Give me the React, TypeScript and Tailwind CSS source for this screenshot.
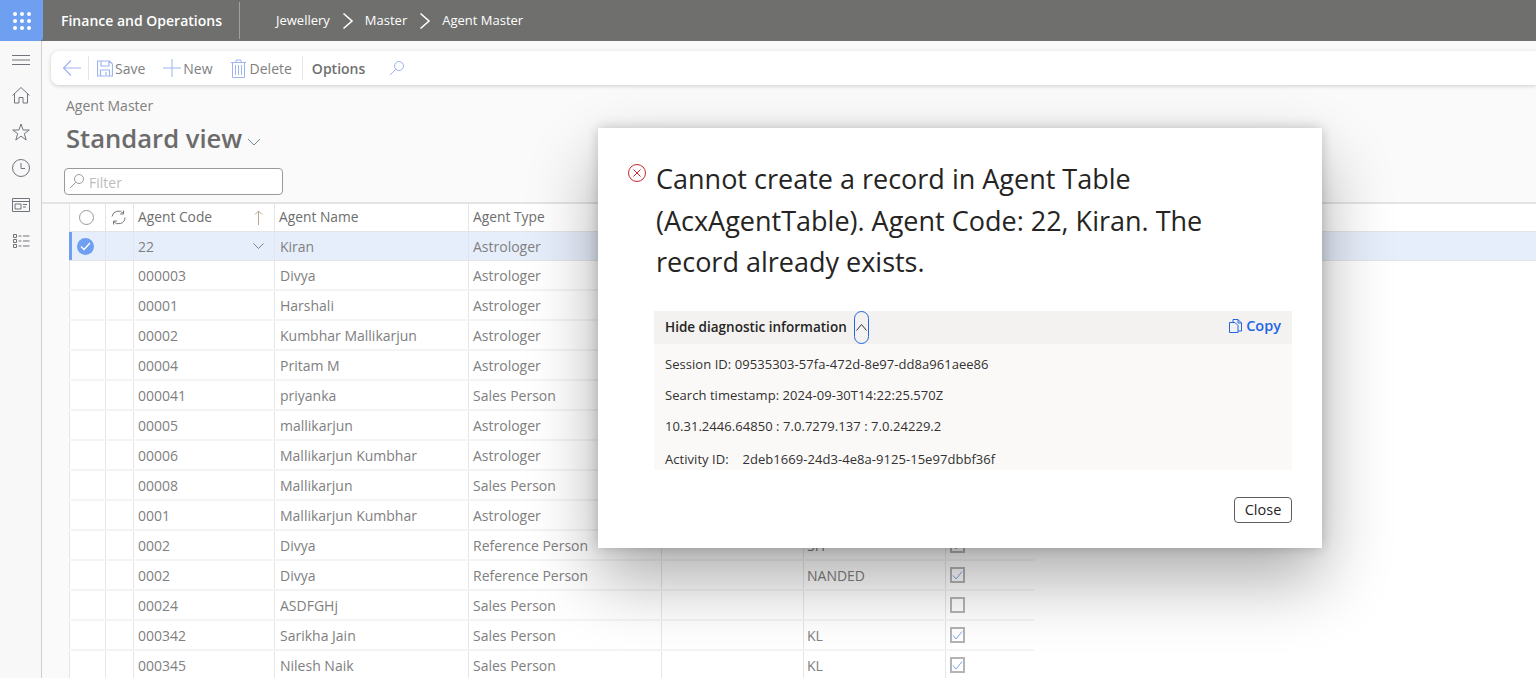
import React from "react";

const FONT = { fontFamily: '"Open Sans", "Noto Sans", sans-serif' };

const rows: [string, string, string, string, boolean | null][] = [
  ["000003", "Divya", "Astrologer", "", true],
  ["00001", "Harshali", "Astrologer", "", true],
  ["00002", "Kumbhar Mallikarjun", "Astrologer", "", true],
  ["00004", "Pritam M", "Astrologer", "", true],
  ["000041", "priyanka", "Sales Person", "", true],
  ["00005", "mallikarjun", "Astrologer", "", true],
  ["00006", "Mallikarjun Kumbhar", "Astrologer", "", true],
  ["00008", "Mallikarjun", "Sales Person", "", true],
  ["0001", "Mallikarjun Kumbhar", "Astrologer", "", true],
  ["0002", "Divya", "Reference Person", "SH", true],
  ["0002", "Divya", "Reference Person", "NANDED", true],
  ["00024", "ASDFGHj", "Sales Person", "", false],
  ["000342", "Sarikha Jain", "Sales Person", "KL", true],
  ["000345", "Nilesh Naik", "Sales Person", "KL", true],
];

function Icon({ className, children, size = 18, vb = 18 }: { className?: string; children: React.ReactNode; size?: number; vb?: number }) {
  return (
    <svg width={size} height={size} viewBox={`0 0 ${vb} ${vb}`} fill="none" stroke="currentColor" strokeWidth="1" className={className}>
      {children}
    </svg>
  );
}

const Search = ({ className }: { className: string }) => (
  <Icon size={16} vb={16} className={className}>
    <circle cx="10" cy="6" r="4.5" />
    <path d="M6.700 9.300 1 15" />
  </Icon>
);

function Checkbox({ checked }: { checked: boolean }) {
  return (
    <div className="ml-[4px] flex h-4 w-[15px] items-center justify-center border-2 border-[#b4b4b4] bg-white">
      {checked && (
        <svg width="11" height="11" viewBox="0 0 11 11" fill="none" stroke="#7ea6ee" strokeWidth="1">
          <path d="M1 5.500 4 9 10 1.500" />
        </svg>
      )}
    </div>
  );
}

function Row({ r }: { r: [string, string, string, string, boolean | null] }) {
  const cell = "flex h-full shrink-0 items-center border-r border-[#e6e6e6]";
  return (
    <div className="flex h-[30px] w-[965px] shrink-0 border-b-2 border-[#f4f4f4] text-[14px] text-[#808080]">
      <div className={`${cell} w-[37px] border-l border-l-[#e6e6e6]`} />
      <div className={`${cell} w-[28px]`} />
      <div className={`${cell} w-[141px] pl-[4px]`}>{r[0]}</div>
      <div className={`${cell} w-[194px] pl-[5px]`}>{r[1]}</div>
      <div className={`${cell} w-[193px] pl-[4px]`}>{r[2]}</div>
      <div className={`${cell} w-[142px]`} />
      <div className={`${cell} w-[142px] pl-[3px]`}>{r[3]}</div>
      <div className="flex h-full w-[88px] items-center">{r[4] !== null && <Checkbox checked={r[4]} />}</div>
    </div>
  );
}

export default function App() {
  return (
    <div style={FONT} className="relative flex h-[678px] w-full flex-col overflow-hidden bg-[#fafafa]">
      {/* top bar */}
      <header className="flex h-[41px] shrink-0 items-center bg-[#6f6f6d] text-white">
        <div className="flex h-full w-[43px] items-center justify-center rounded-br-[4px] bg-[#6f9ff0]">
          <div className="grid grid-cols-3 gap-[3px]">
            {Array.from({ length: 9 }).map((_, i) => (
              <span key={i} className="h-[4px] w-[4px] rounded-full bg-white" />
            ))}
          </div>
        </div>
        <div className="ml-[18px] w-[178px] text-[14px] font-semibold">Finance and Operations</div>
        <div className="h-[37px] w-px bg-[#a0a09e]" />
        <nav className="ml-[36px] flex items-center text-[13px]">
          <span>Jewellery</span>
          <svg width="12" height="18" viewBox="0 0 12 18" fill="none" stroke="white" strokeWidth="1.600" className="ml-[12px] mr-[11px]">
            <path d="M1.500 1.500 10 9l-8.500 7.500" />
          </svg>
          <span>Master</span>
          <svg width="12" height="18" viewBox="0 0 12 18" fill="none" stroke="white" strokeWidth="1.600" className="ml-[12px] mr-[11px]">
            <path d="M1.500 1.500 10 9l-8.500 7.500" />
          </svg>
          <span>Agent Master</span>
        </nav>
      </header>

      <div className="flex min-h-0 flex-1">
        {/* sidebar */}
        <aside className="flex w-[42px] shrink-0 flex-col items-center border-r border-[#cfcfcf] bg-[#f8f8f8] pt-[10px] text-[#70757c]">
          <Icon>
            <path d="M0 4.500h18M0 9h18M0 13.500h18" />
          </Icon>
          <Icon className="mt-[17px]">
            <path d="M.5 9.500 9 1.500l8.500 8M2.500 7.500V17H7v-5.500h4V17h4.500V7.500" />
          </Icon>
          <Icon className="mt-[19px]">
            <path d="M9 1 11.100 7h6.200l-5 3.700 1.900 6.300L9 13.200 3.800 17l1.900-6.300-5-3.700h6.200z" />
          </Icon>
          <Icon className="mt-[18px]">
            <circle cx="9" cy="9" r="8.500" />
            <path d="M9 4v5.500h4" />
          </Icon>
          <Icon className="mt-[19px]">
            <path d="M.5 2.500h17v13H.5zM.5 5.500h17M3 8h6v5H3zM11 8.500h4M11 11h3" />
          </Icon>
          <Icon className="mt-[18px]">
            <path d="M1.500 2.500h3v3h-3zM1.500 7.500h3v3h-3zM1.500 12.500h3v3h-3zM6.500 4h3M11 4h6.500M6.500 9h3M11 9h6.500M6.500 14h3M11 14h6.500" />
          </Icon>
        </aside>

        {/* main */}
        <main className="flex min-w-0 flex-1 flex-col">
          {/* toolbar */}
          <div className="ml-[9px] mt-[10px] flex h-[34px] shrink-0 items-center rounded-l-[8px] bg-white text-[14px] text-[#808080] shadow-[0_1px_4px_rgba(0,0,0,0.18)]">
            <svg width="20" height="18" viewBox="0 0 20 18" fill="none" stroke="#9db4ee" strokeWidth="1.200" className="ml-[11px]">
              <path d="M19 9H2M9 1.500 1.500 9 9 16.500" />
            </svg>
            <div className="ml-[6px] h-[24px] w-px bg-[#e6e6e6]" />
            <svg width="16" height="17" viewBox="0 0 16 17" fill="none" stroke="#9db4ee" strokeWidth="1.200" className="ml-[8px]">
              <path d="M.5 1h12l3 3v12H.5zM4 1v5h8V1M3.500 16v-6h9v6M9 12v3" />
            </svg>
            <span className="ml-[2px]">Save</span>
            <svg width="18" height="18" viewBox="0 0 18 18" fill="none" stroke="#9db4ee" strokeWidth="1" className="ml-[18px]">
              <path d="M9 0v18M0 9h18" />
            </svg>
            <span className="ml-[2px]">New</span>
            <svg width="15" height="19" viewBox="0 0 15 19" fill="none" stroke="#9db4ee" strokeWidth="1" className="ml-[18px]">
              <path d="M0 3.500h15M5 3.500V1h5v2.500M1.500 3.500v15h12v-15M4.500 6v10M7.500 6v10M10.500 6v10" />
            </svg>
            <span className="ml-[4px]">Delete</span>
            <div className="ml-[10px] h-[24px] w-px bg-[#e6e6e6]" />
            <span className="ml-[9px] font-semibold text-[#6f6f6f]">Options</span>
            <Search className="ml-[24px] text-[#9db4ee]" />
          </div>

          {/* page heading */}
          <div className="ml-[24px] mt-[11px] text-[14px] leading-[19px] text-[#808080]">Agent Master</div>
          <div className="ml-[24px] mt-[6px] flex h-[36px] items-center text-[#6b6b6b]">
            <span className="text-[25.600px] font-semibold">Standard view</span>
            <svg width="14" height="8" viewBox="0 0 14 8" fill="none" stroke="#6f8a96" strokeWidth="1" className="ml-[5px] mt-[6px]">
              <path d="M1 1l6 6 6-6" />
            </svg>
          </div>
          <div className="ml-[22px] mt-[11px] flex h-[27px] w-[219px] shrink-0 items-center rounded-[4px] border border-[#9a9a9a] bg-white pl-[4px] text-[14px] text-[#bdbdbd]">
            <Search className="-mt-[2px] text-[#9a9a9a]" />
            <span className="ml-[4px] mt-[2px]">Filter</span>
          </div>

          {/* grid */}
          <div className="mt-[7px] flex min-h-0 flex-1 flex-col overflow-hidden border-t-2 border-[#e4e4e4] pl-[27px] [background:linear-gradient(90deg,#fafafa_27px,#ffffff_27px)]">
            <div className="relative flex h-[27px] w-full shrink-0 text-[13.800px] font-medium text-[#6e6e6e]">
              <div className="flex h-full w-[37px] items-center justify-center border-x border-[#e6e6e6]">
                <span className="mr-[2px] h-[15px] w-[15px] rounded-full border border-[#999]" />
              </div>
              <div className="flex h-full w-[28px] items-center justify-center border-r border-[#e6e6e6]">
                <svg width="15" height="15" viewBox="0 0 15 15" fill="none" stroke="#777" strokeWidth="1" className="mr-[2px]">
                  <path d="M1 6.500A6.500 6.500 0 0 1 12.500 3.500M14 7.500A6.500 6.500 0 0 1 2.500 11.500M12.500 .5v3.500H9M2.500 14.500V11H6" />
                </svg>
              </div>
              <div className="flex h-full w-[141px] items-center justify-between border-r border-[#e6e6e6] pl-[4px] pr-[11px]">
                <span>Agent Code</span>
                <svg width="9" height="15" viewBox="0 0 9 15" fill="none" stroke="#b9a68e" strokeWidth="1">
                  <path d="M4.500 15V1M1 4.500 4.500 1 8 4.500" />
                </svg>
              </div>
              <div className="flex h-full w-[194px] items-center border-r border-[#e6e6e6] pl-[4px]">Agent Name</div>
              <div className="flex h-full w-[193px] items-center border-r border-[#e6e6e6] pl-[4px]">Agent Type</div>
            </div>

            <div className="relative flex h-[30px] w-full shrink-0 border-y border-[#e4e4e4] bg-[#e7eefb] text-[14px] text-[#808080]">
              <div className="flex h-full w-[37px] items-center border-r border-[#e0e5ef]">
                <div className="h-full w-[3px] bg-[#6f9ff0]" />
                <div className="ml-[5px] flex h-[17px] w-[17px] items-center justify-center rounded-full bg-[#6f9ff0]">
                  <svg width="11" height="9" viewBox="0 0 11 9" fill="none" stroke="white" strokeWidth="1.300">
                    <path d="M1 4.500 4 7.500 10 1" />
                  </svg>
                </div>
              </div>
              <div className="h-full w-[28px] border-r border-[#e0e5ef]" />
              <div className="flex h-full w-[141px] items-center justify-between border-r border-[#e0e5ef] pl-[4px] pr-[10px]">
                <span>22</span>
                <svg width="11" height="6" viewBox="0 0 11 6" fill="none" stroke="#808080" strokeWidth="1">
                  <path d="M.5.5l5 5 5-5" />
                </svg>
              </div>
              <div className="flex h-full w-[194px] items-center border-r border-[#e0e5ef] pl-[5px]">Kiran</div>
              <div className="flex h-full w-[193px] items-center border-r border-[#e0e5ef] pl-[4px]">Astrologer</div>
            </div>

            {rows.map((r, i) => (
              <Row key={i} r={r} />
            ))}
          </div>
        </main>
      </div>

      {/* dialog */}
      <div
        role="dialog"
        className="absolute left-[598px] top-[128px] flex h-[420px] w-[724px] flex-col bg-white shadow-[0_32px_64px_rgba(0,0,0,0.32),0_0_12px_rgba(0,0,0,0.2)]"
      >
        <div className="ml-[30px] mt-[30px] flex">
          <svg width="18" height="18" viewBox="0 0 18 18" fill="none" stroke="#c5262c" strokeWidth="1" className="mt-[6px] shrink-0">
            <circle cx="9" cy="9" r="8.500" />
            <path d="M5.500 5.500l7 7M12.500 5.500l-7 7" />
          </svg>
          <h1 className="ml-[10px] w-[620px] text-[27px] leading-[41.500px] text-[#252423]">
            Cannot create a record in Agent Table (AcxAgentTable). Agent Code: 22, Kiran. The record already exists.
          </h1>
        </div>

        <div className="ml-[56px] mt-[28px] w-[638px]">
          <div className="flex h-[33px] items-center justify-between bg-[#f3f2f1] pl-[11px] pr-[11px]">
            <div className="flex h-full items-center">
              <span className="text-[13.500px] font-semibold text-[#252423]">Hide diagnostic information</span>
              <button className="ml-[7px] flex h-full w-[15px] items-center justify-center rounded-full border border-[#2266e3]">
                <svg width="11" height="7" viewBox="0 0 11 7" fill="none" stroke="#333" strokeWidth="1">
                  <path d="M.5 6.500l5-6 5 6" />
                </svg>
              </button>
            </div>
            <div className="-mt-[2px] flex items-center text-[14.500px] font-semibold text-[#2266e3]">
              <svg width="13" height="14" viewBox="0 0 13 14" fill="none" stroke="#2266e3" strokeWidth="1" className="mr-[4px]">
                <path d="M4 3.500V.5h5l3.500 3.500v8H9M.5 3.500H6l3 3v7H.5zM9 .5V4h3.500" />
              </svg>
              Copy
            </div>
          </div>
          <div className="flex h-[126px] flex-col overflow-hidden bg-[#faf9f8] pl-[11px] pt-[11px] text-[13px] leading-[18px] tracking-[0.05px] text-[#323130]">
            <p>Session ID: 09535303-57fa-472d-8e97-dd8a961aee86</p>
            <p className="mt-[13px]">Search timestamp: 2024-09-30T14:22:25.570Z</p>
            <p className="mt-[13px]">10.31.2446.64850 : 7.0.7279.137 : 7.0.24229.2</p>
            <p className="mt-[15px] whitespace-pre">Activity ID:{"    "}2deb1669-24d3-4e8a-9125-15e97dbbf36f</p>
          </div>
        </div>

        <div className="mr-[30px] mt-[27px] flex justify-end">
          <button className="flex h-[26px] w-[58px] items-center justify-center rounded-[4px] border border-[#605e5c] bg-white text-[14.500px] text-[#252423]">
            Close
          </button>
        </div>
      </div>
    </div>
  );
}
